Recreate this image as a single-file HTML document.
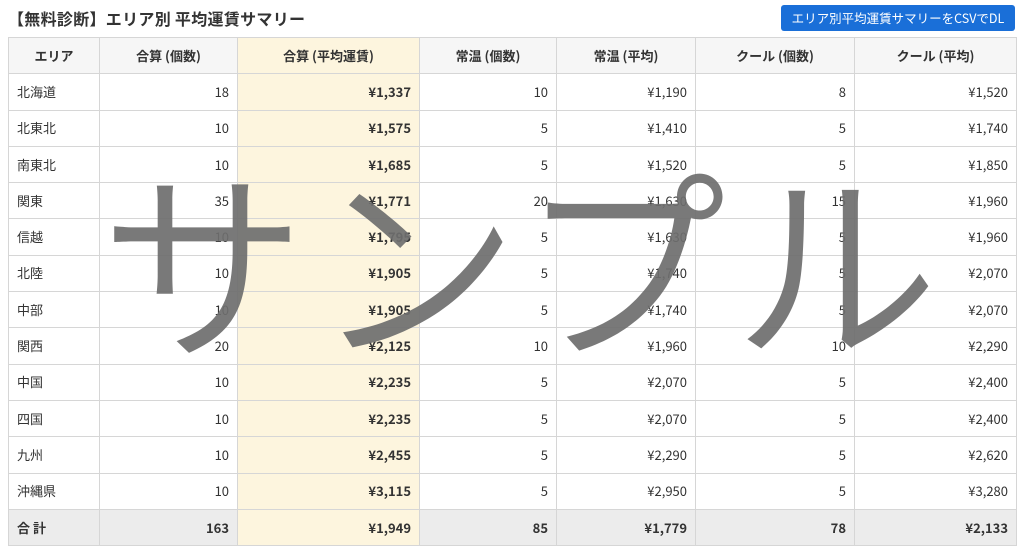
<!DOCTYPE html>
<html><head><meta charset="utf-8"><style>
body{margin:0;width:1024px;height:551px;background:#fff;font-family:"Noto Sans CJK JP","Liberation Sans",sans-serif;color:#333;position:relative;overflow:hidden}
h1{position:absolute;left:8px;top:6px;margin:0;font-size:16px;line-height:24px;font-weight:bold;color:#333;letter-spacing:0.3px}
.btn{position:absolute;left:781px;top:5px;width:234px;height:26px;background:#1a6fd8;color:#fff;border-radius:3px;font-size:12.5px;line-height:26px;text-align:center}
table{position:absolute;left:8px;top:37px;border-collapse:collapse;font-size:13px}
td,th{border:1px solid #d6d6d6;height:36.3px;padding:0 8px;box-sizing:border-box;line-height:16px}
th{background:#f6f6f6;font-weight:bold;text-align:center}
td{text-align:right}
td:first-child{text-align:left}
.h{background:#fdf5de;font-weight:bold}
th.h{background:#fdf5de}
tr.t td{background:#ececec;font-weight:bold}
tr.t td.h{background:#fdf5de}
.wm{position:absolute;left:100px;top:152px;font-size:206px;font-weight:350;color:rgba(110,110,110,0.92);font-family:"Noto Sans CJK JP",sans-serif;letter-spacing:7px;line-height:1;white-space:nowrap}
</style></head><body>
<h1>【無料診断】エリア別 平均運賃サマリー</h1>
<div class="btn">エリア別平均運賃サマリーをCSVでDL</div>
<table>
<tr><th style="width:91px">エリア</th><th style="width:138px">合算 (個数)</th><th class="h" style="width:182px">合算 (平均運賃)</th><th style="width:137px">常温 (個数)</th><th style="width:139px">常温 (平均)</th><th style="width:159px">クール (個数)</th><th style="width:162px">クール (平均)</th></tr>
<tr><td>北海道</td><td>18</td><td class="h">¥1,337</td><td>10</td><td>¥1,190</td><td>8</td><td>¥1,520</td></tr>
<tr><td>北東北</td><td>10</td><td class="h">¥1,575</td><td>5</td><td>¥1,410</td><td>5</td><td>¥1,740</td></tr>
<tr><td>南東北</td><td>10</td><td class="h">¥1,685</td><td>5</td><td>¥1,520</td><td>5</td><td>¥1,850</td></tr>
<tr><td>関東</td><td>35</td><td class="h">¥1,771</td><td>20</td><td>¥1,630</td><td>15</td><td>¥1,960</td></tr>
<tr><td>信越</td><td>10</td><td class="h">¥1,795</td><td>5</td><td>¥1,630</td><td>5</td><td>¥1,960</td></tr>
<tr><td>北陸</td><td>10</td><td class="h">¥1,905</td><td>5</td><td>¥1,740</td><td>5</td><td>¥2,070</td></tr>
<tr><td>中部</td><td>10</td><td class="h">¥1,905</td><td>5</td><td>¥1,740</td><td>5</td><td>¥2,070</td></tr>
<tr><td>関西</td><td>20</td><td class="h">¥2,125</td><td>10</td><td>¥1,960</td><td>10</td><td>¥2,290</td></tr>
<tr><td>中国</td><td>10</td><td class="h">¥2,235</td><td>5</td><td>¥2,070</td><td>5</td><td>¥2,400</td></tr>
<tr><td>四国</td><td>10</td><td class="h">¥2,235</td><td>5</td><td>¥2,070</td><td>5</td><td>¥2,400</td></tr>
<tr><td>九州</td><td>10</td><td class="h">¥2,455</td><td>5</td><td>¥2,290</td><td>5</td><td>¥2,620</td></tr>
<tr><td>沖縄県</td><td>10</td><td class="h">¥3,115</td><td>5</td><td>¥2,950</td><td>5</td><td>¥3,280</td></tr>
<tr class="t"><td>合 計</td><td>163</td><td class="h">¥1,949</td><td>85</td><td>¥1,779</td><td>78</td><td>¥2,133</td></tr>
</table>
<div class="wm">サンプル</div>
</body></html>
